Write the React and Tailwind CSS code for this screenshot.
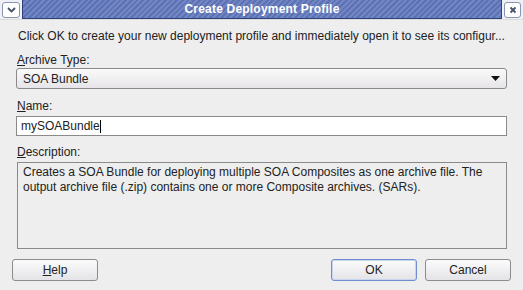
import React from "react";

const font = { fontFamily: '"Liberation Sans", Arial, sans-serif' };

function Btn({ children, primary }) {
  return (
    <button
      className={
        "h-[22px] w-[86px] rounded-[3px] border text-[12px] text-[#222] bg-[linear-gradient(#fbfbfb,#e4e4e8)] " +
        (primary ? "border-[#6f8fcc] shadow-[inset_0_0_0_1px_#c9d6ef]" : "border-[#8c8c8c]")
      }
    >
      {children}
    </button>
  );
}

export default function App() {
  return (
    <div className="w-[523px] h-[290px] overflow-hidden bg-[#eeeeee] flex flex-col text-[#222]" style={font}>
      {/* title bar */}
      <div className="h-[20px] shrink-0 flex items-stretch border-b border-[#dcdcdc]">
        <div className="w-[22px] shrink-0 flex items-center justify-center bg-[#eef0f6]">
          <div className="w-[18px] h-[16px] rounded-[3px] border border-[#8a93b0] bg-white flex items-center justify-center">
            <svg width="9" height="6" viewBox="0 0 9 6">
              <path d="M1 1 L4.5 4.5 L8 1" stroke="#48506a" strokeWidth="1.8" fill="none" />
            </svg>
          </div>
        </div>
        <div className="flex-1 min-w-0 flex items-center justify-center border-x border-b border-[#2f3f78] bg-[repeating-linear-gradient(135deg,#5d72b4_0px,#5d72b4_2px,#7286c4_2px,#7286c4_4px)]">
          <span className="text-white font-bold text-[12px] tracking-[0.2px]">Create Deployment Profile</span>
        </div>
        <div className="w-[21px] shrink-0 flex items-center justify-center bg-[#eef0f6]">
          <div className="w-[17px] h-[16px] rounded-[3px] border border-[#8a93b0] bg-white flex items-center justify-center">
            <svg width="8" height="8" viewBox="0 0 8 8">
              <path d="M1.5 1.5 L6.5 6.5 M6.5 1.5 L1.5 6.5" stroke="#48506a" strokeWidth="1.8" />
            </svg>
          </div>
        </div>
      </div>

      <div className="flex-1 flex flex-col px-[16px] text-[12px]">
        <p className="mt-[9px] ml-[2px] leading-[14px] whitespace-nowrap">
          Click OK to create your new deployment profile and immediately open it to see its configur...
        </p>

        <label className="mt-[10px] ml-[1px] leading-[14px]">
          <span className="underline">A</span>rchive Type:
        </label>
        <div className="mt-[1px] h-[21px] w-[491px] rounded-[3px] border border-[#8a8a8a] bg-[linear-gradient(#fafafa,#e6e4e8)] flex items-center justify-between pl-[6px] pr-[5px]">
          <span>SOA Bundle</span>
          <svg width="9" height="6" viewBox="0 0 9 6" className="mr-[1px]">
            <path d="M0 0 H9 L4.5 5 Z" fill="#111" />
          </svg>
        </div>

        <label className="mt-[10px] ml-[1px] leading-[14px]">
          <span className="underline">N</span>ame:
        </label>
        <div className="mt-[3px] h-[20px] w-[491px] border border-[#8a8a8a] bg-white flex items-center px-[4px]">
          <span>mySOABundle</span>
          <span className="w-[1px] h-[13px] bg-black" />
        </div>

        <label className="mt-[9px] ml-[1px] leading-[14px]">
          <span className="underline">D</span>escription:
        </label>
        <div className="mt-[3px] h-[87px] w-[490px] ml-[1px] border border-[#8a8a8a] pl-[5px] pr-[12px] pt-[2px] leading-[15px]">
          Creates a SOA Bundle for deploying multiple SOA Composites as one archive file. The output archive file (.zip) contains one or more Composite archives. (SARs).
        </div>

        <div className="mt-[10px] flex items-center -ml-[4px] -mr-[4px]">
          <Btn>
            <span className="underline">H</span>elp
          </Btn>
          <div className="flex-1" />
          <Btn primary>OK</Btn>
          <div className="w-[8px]" />
          <Btn>Cancel</Btn>
        </div>
      </div>
    </div>
  );
}
